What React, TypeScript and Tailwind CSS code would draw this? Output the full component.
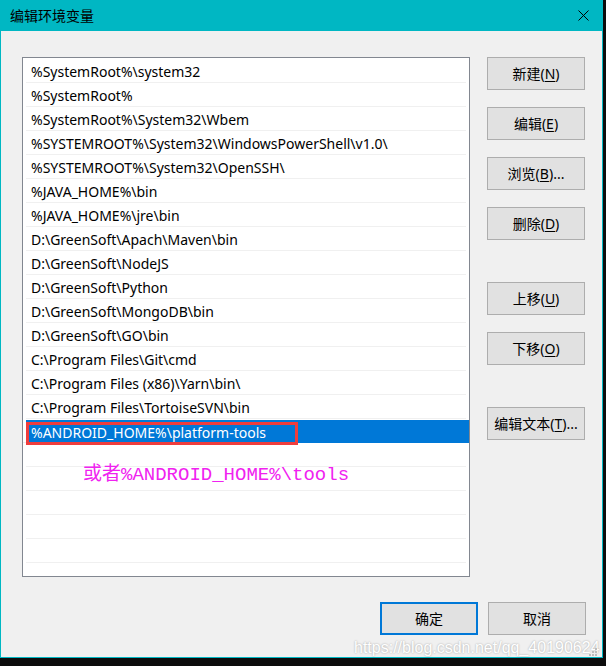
import React from 'react'

const paths = [
  '%SystemRoot%\\system32',
  '%SystemRoot%',
  '%SystemRoot%\\System32\\Wbem',
  '%SYSTEMROOT%\\System32\\WindowsPowerShell\\v1.0\\',
  '%SYSTEMROOT%\\System32\\OpenSSH\\',
  '%JAVA_HOME%\\bin',
  '%JAVA_HOME%\\jre\\bin',
  'D:\\GreenSoft\\Apach\\Maven\\bin',
  'D:\\GreenSoft\\NodeJS',
  'D:\\GreenSoft\\Python',
  'D:\\GreenSoft\\MongoDB\\bin',
  'D:\\GreenSoft\\GO\\bin',
  'C:\\Program Files\\Git\\cmd',
  'C:\\Program Files (x86)\\Yarn\\bin\\',
  'C:\\Program Files\\TortoiseSVN\\bin',
]

const font = "font-['Noto_Sans','Noto_Sans_CJK_SC',sans-serif]"

function Btn({ label, hot, tail = '', primary = false }: { label: string; hot: string; tail?: string; primary?: boolean }) {
  return (
    <div
      className={`w-[98px] h-[33px] flex items-center justify-center bg-[#e1e1e1] text-[14px] text-black ${
        primary ? 'border-2 border-[#0078d7]' : 'border border-[#adadad]'
      }`}
    >
      {label}
      {hot && (
        <>
          (<span className="underline underline-offset-2">{hot}</span>)
        </>
      )}
      {tail}
    </div>
  )
}

export default function App() {
  return (
    <div className={`relative w-[606px] h-[666px] bg-[#0c0c0c] ${font}`}>
      <div className="w-[603px] h-[658px] border border-[#00b7c3] bg-[#f0f0f0] flex flex-col">
        {/* Title bar */}
        <div className="h-[31px] bg-[#00b7c3] flex items-center justify-between pl-[9px] pr-[13px] -mt-px">
          <span className="text-[14px] text-black">编辑环境变量</span>
          <svg width="11" height="11" viewBox="0 0 11 11">
            <path d="M0.5 0.5L10.5 10.5M10.5 0.5L0.5 10.5" stroke="#000" strokeWidth="1" />
          </svg>
        </div>

        <div className="flex pl-[21px] pt-[26px]">
          {/* List */}
          <div className="w-[448px] h-[520px] border border-[#828790] bg-white pt-px px-[3px]">
            {paths.map((p) => (
              <div key={p} className="h-[24px] border-b border-[#f0f0f0] flex items-center pl-[5px] pt-[1px] text-[14px] text-black">
                {p}
              </div>
            ))}
            <div className="h-[24px] border-b border-[#f0f0f0] -mx-[3px] pl-[3px] pt-px">
              <div className="relative h-[23px] bg-[#0078d7] flex items-center pl-[5px] pt-[1px] text-[14px] text-white">
                %ANDROID_HOME%\platform-tools
                <div className="absolute left-0 top-[2px] w-[272px] h-[23px] border-[3px] border-[#ef3d3d]" />
              </div>
            </div>
            {[0, 1, 2, 3, 4].map((i) => (
              <div key={i} className="relative h-[24px] border-b border-[#f0f0f0]">
                {i === 0 && (
                  <span className="absolute left-[57px] top-[23px] z-10 whitespace-nowrap text-[19px] leading-none text-[#f022f0] font-['Liberation_Mono','Noto_Sans_CJK_SC',monospace]">
                    或者%ANDROID_HOME%\tools
                  </span>
                )}
              </div>
            ))}
          </div>

          {/* Side buttons */}
          <div className="ml-[17px] flex flex-col">
            <Btn label="新建" hot="N" />
            <div className="mt-[17px]"><Btn label="编辑" hot="E" /></div>
            <div className="mt-[17px]"><Btn label="浏览" hot="B" tail="..." /></div>
            <div className="mt-[17px]"><Btn label="删除" hot="D" /></div>
            <div className="mt-[42px]"><Btn label="上移" hot="U" /></div>
            <div className="mt-[17px]"><Btn label="下移" hot="O" /></div>
            <div className="mt-[42px]"><Btn label="编辑文本" hot="T" tail="..." /></div>
          </div>
        </div>

        {/* Bottom buttons */}
        <div className="flex justify-end gap-[10px] pr-[16px] mt-[25px]">
          <Btn label="确定" hot="" primary />
          <Btn label="取消" hot="" />
        </div>
      </div>

      {/* watermark */}
      <span className="absolute left-[354px] top-[640px] text-[16px] leading-[16px] whitespace-nowrap text-white font-['Liberation_Sans',sans-serif] [text-shadow:0_0_2px_rgba(0,0,0,0.35)]">
        https://blog.csdn.net/qq_40190624
      </span>
      {/* resize grip */}
      <svg className="absolute left-[589px] top-[648px]" width="9" height="9" viewBox="0 0 9 9">
        {[[6, 0], [3, 3], [6, 3], [0, 6], [3, 6], [6, 6]].map(([x, y]) => (
          <rect key={`${x}-${y}`} x={x} y={y} width="2" height="2" fill="#bdbdbd" />
        ))}
      </svg>
    </div>
  )
}
